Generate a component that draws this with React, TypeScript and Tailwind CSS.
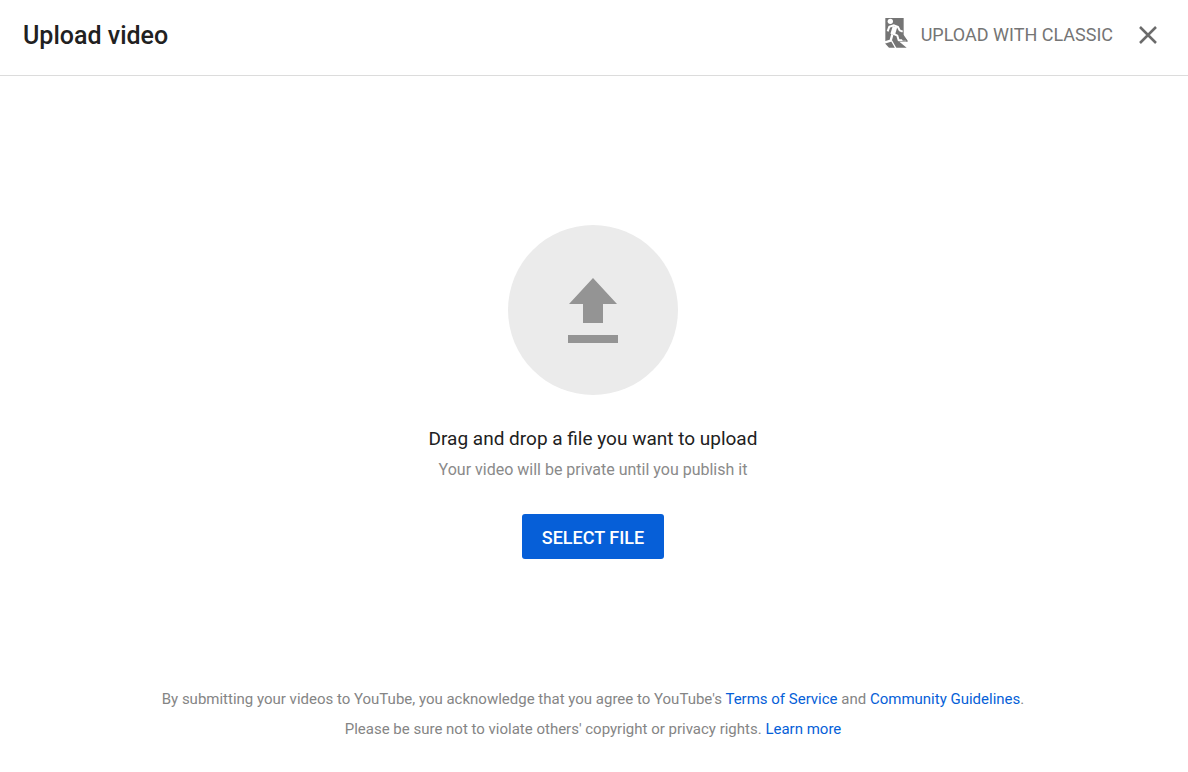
import React from "react";

function ExitIcon() {
  return (
    <svg width="24" height="32" viewBox="0 0 72 96" aria-hidden="true">
      <path fill="#757575" d="M4 3H59V58L71 72V74H46L68 92H15L4 80Z" />
      <circle cx="19" cy="13" r="8" fill="#fff" />
      <g fill="none" stroke="#fff" strokeLinejoin="round">
        <path d="M11 43L16 29L30 25L42 30L47 40L56 44" strokeWidth="6" />
        <path d="M33 29L26 52" strokeWidth="14" />
        <path d="M27 50L40 56L44 70H66" strokeWidth="6" />
        <path d="M25 52L20 71L3 76" strokeWidth="7" />
        <path d="M22 70L30 84L36 95" strokeWidth="4" />
      </g>
      <path fill="#757575" d="M46 50L59 54L71 71H56Z" />
    </svg>
  );
}

function CloseIcon() {
  return (
    <svg width="18" height="18" viewBox="0 0 18 18" aria-hidden="true">
      <path d="M1 1L17 17M17 1L1 17" fill="none" stroke="#6b6b6b" strokeWidth="2.5" />
    </svg>
  );
}

function UploadIcon() {
  return (
    <svg width="50" height="66" viewBox="0 0 50 66" fill="#949494" aria-hidden="true">
      <path d="M25 1L49 27H35V46H15V27H1Z" />
      <path d="M0 58H50V66H0Z" />
    </svg>
  );
}

export default function App() {
  return (
    <div className="flex min-h-screen flex-col bg-white font-['Roboto',sans-serif] text-[#212121]">
      <header className="flex items-start justify-between border-b border-[#dcdcdc] pt-4 pr-[29px] pb-[19px] pl-[23px]">
        <h1 className="text-[25px] leading-10 font-medium">Upload video</h1>
        <div className="flex items-center gap-6">
          <button type="button" className="flex items-start gap-[13px] text-lg leading-[38px] text-[#757575]">
            <span className="pt-px">
              <ExitIcon />
            </span>
            UPLOAD WITH CLASSIC
          </button>
          <button type="button" aria-label="Close" className="p-0.5">
            <CloseIcon />
          </button>
        </div>
      </header>
      <main className="flex flex-1 flex-col items-center justify-center pt-[23px] pr-0.5 text-center">
        <div className="flex size-[170px] items-center justify-center rounded-full bg-[#ebebeb]">
          <UploadIcon />
        </div>
        <h2 className="mt-7 text-[19px] leading-8">Drag and drop a file you want to upload</h2>
        <p className="text-base leading-[30px] text-[#8a8a8a]">Your video will be private until you publish it</p>
        <button type="button" className="mt-[29px] rounded-[3px] bg-[#065fd8] px-5 pt-[9px] pb-[7px] text-lg leading-[29px] font-medium text-white">
          SELECT FILE
        </button>
      </main>
      <footer className="pr-0.5 pb-7 text-center text-[15px] leading-[30px] text-[#858585]">
        <p>
          By submitting your videos to YouTube, you acknowledge that you agree to YouTube's{" "}
          <a href="#terms" className="text-[#065fd8]">Terms of Service</a> and{" "}
          <a href="#guidelines" className="text-[#065fd8]">Community Guidelines</a>.
        </p>
        <p>
          Please be sure not to violate others' copyright or privacy rights.{" "}
          <a href="#learn-more" className="text-[#065fd8]">Learn more</a>
        </p>
      </footer>
    </div>
  );
}
